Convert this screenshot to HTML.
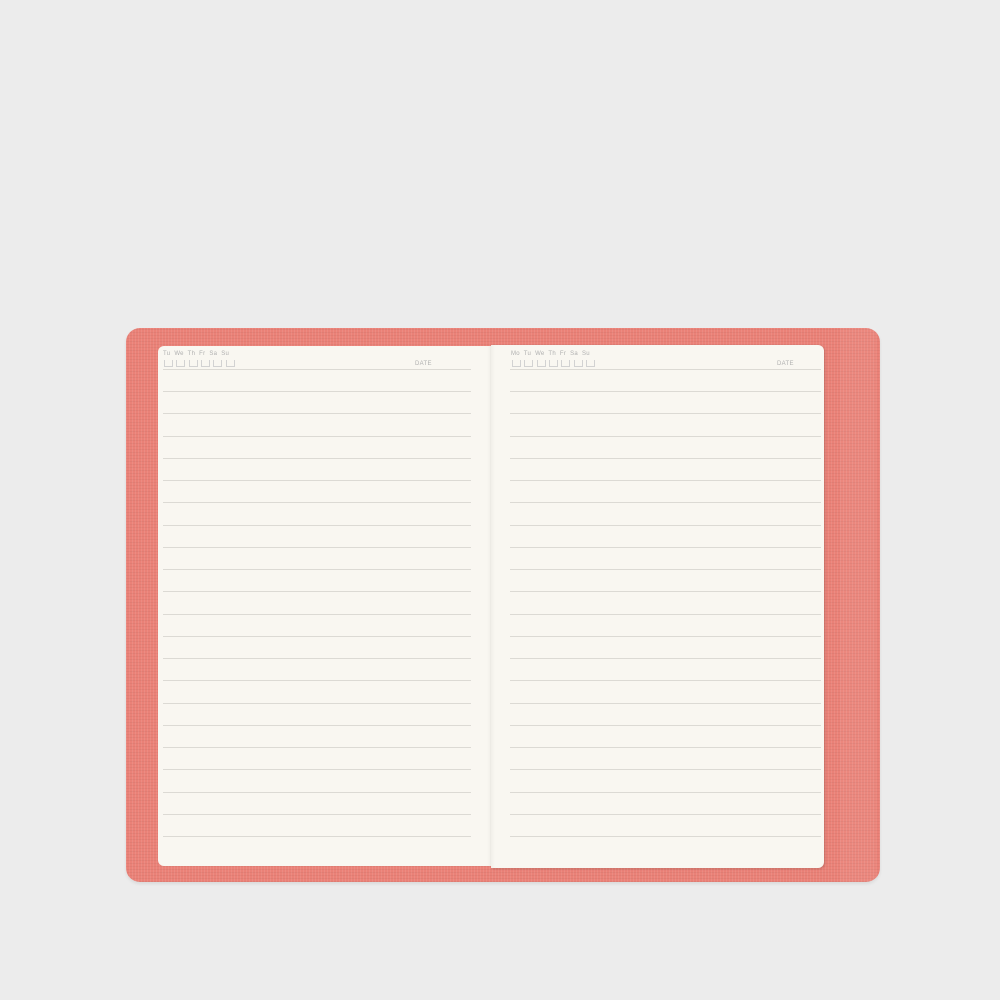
<!DOCTYPE html><html><head><style>
body{margin:0;width:1000px;height:1000px;background:#ececec;position:relative;overflow:hidden;font-family:"Liberation Sans",sans-serif}
.cover{position:absolute;left:126px;top:328px;width:754px;height:554px;background:#ea8177;border-radius:14px;box-shadow:0 2px 3px rgba(0,0,0,.08);
background-image:repeating-linear-gradient(90deg,rgba(255,255,255,.08) 0 1px,transparent 1px 3px),repeating-linear-gradient(0deg,rgba(0,0,0,.04) 0 1px,transparent 1px 3px)}
.strap{position:absolute;left:840px;top:328px;width:36px;height:554px;background:rgba(255,255,255,.05)}
.page{position:absolute;background:#f9f7f1}
.l{left:158px;top:346px;width:333px;height:520px;border-radius:6px 0 0 6px;box-shadow:inset -4px 0 6px -5px rgba(0,0,0,.12)}
.r{left:491px;top:345px;width:333px;height:523px;border-radius:0 6px 6px 0;box-shadow:inset 4px 0 6px -5px rgba(0,0,0,.1),1px 1px 2px rgba(0,0,0,.15)}
.line{position:absolute;height:1px;background:#dcdad4}
.t{position:absolute;font-size:6px;color:#b0b0b0;letter-spacing:.3px}
.bx{position:absolute;width:7px;height:6px;border:1px solid #d2d2d2;border-top:none}
</style></head><body>
<div class="cover"></div><div class="strap"></div>
<div class="page l"></div><div class="page r"></div>
<div id="x"></div>
<div class="t" style="left:163px;top:351px">Tu&nbsp; We&nbsp; Th&nbsp; Fr&nbsp; Sa&nbsp; Su</div>
<div class="t" style="left:415px;top:361px">DATE</div>
<div class="t" style="left:511px;top:351px">Mo&nbsp; Tu&nbsp; We&nbsp; Th&nbsp; Fr&nbsp; Sa&nbsp; Su</div>
<div class="t" style="left:777px;top:361px">DATE</div>
<script>
let h='';
for(let i=0;i<22;i++){let y=369+i*22.24;
h+=`<div class="line" style="left:163px;top:${y}px;width:308px"></div><div class="line" style="left:510px;top:${y}px;width:311px"></div>`;}
for(let i=0;i<6;i++)h+=`<div class="bx" style="left:${164+i*12.3}px;top:360px"></div>`;
for(let i=0;i<7;i++)h+=`<div class="bx" style="left:${512+i*12.3}px;top:360px"></div>`;
document.getElementById('x').innerHTML=h;
</script>
</body></html>
